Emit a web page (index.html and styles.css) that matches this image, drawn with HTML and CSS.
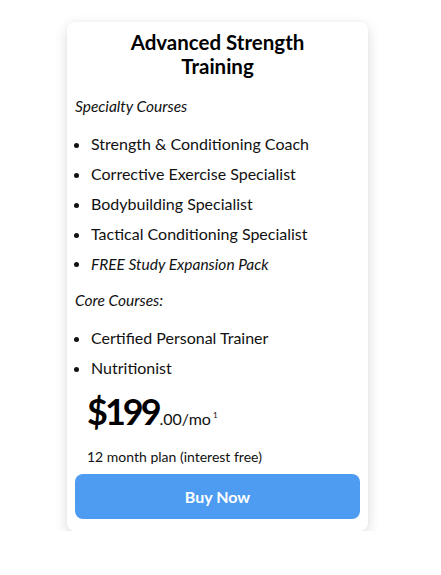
FILE: index.html
```html
<!DOCTYPE html>
<html>
<head>
<meta charset="utf-8">
<link rel="stylesheet" href="styles.css">
</head>
<body>
<div class="card">
  <h2 class="title">Advanced Strength<br>Training</h2>
  <p class="group-label group-first">Specialty Courses</p>
  <ul class="courses">
    <li>Strength &amp; Conditioning Coach</li>
    <li>Corrective Exercise Specialist</li>
    <li>Bodybuilding Specialist</li>
    <li>Tactical Conditioning Specialist</li>
    <li class="bonus">FREE Study Expansion Pack</li>
  </ul>
  <p class="group-label">Core Courses:</p>
  <ul class="courses">
    <li>Certified Personal Trainer</li>
    <li>Nutritionist</li>
  </ul>
  <div class="pricing">
    <div class="price"><span class="amount">$199</span><span class="cents">.00/mo</span><sup class="note">1</sup></div>
    <div class="plan">12 month plan (interest free)</div>
  </div>
  <button class="buy">Buy Now</button>
</div>
</body>
</html>
```
FILE: styles.css
```css
* { box-sizing: border-box; }
html, body { margin: 0; padding: 0; background: #fff; }
body {
  font-family: Lato, "Open Sans", sans-serif;
  color: #111;
  padding: 22px 0 0 67px;
}
.card {
  width: 301px;
  background: #fff;
  border-radius: 8px;
  box-shadow: 0 4px 14px rgba(0, 0, 0, 0.14), 0 0 3px rgba(0,0,0,0.04);
  padding: 8px 8px 12px 8px;
  display: flex;
  flex-direction: column;
}
.title {
  margin: 0;
  font-size: 20.5px;
  line-height: 24px;
  font-weight: 700;
  text-align: center;
  color: #000;
}
.group-label {
  margin: 11px 0 0 0;
  font-size: 15.5px;
  line-height: 20px;
  font-style: italic;
}
.group-first { margin-top: 18px; }
.courses {
  margin: 13px 0 0 0;
  padding: 0 0 0 16px;
  list-style: disc;
}
.courses li {
  font-size: 16px;
  line-height: 30px;
}
.courses .bonus { font-style: italic; font-size: 15.5px; }
.pricing {
  padding-left: 12px;
  margin-top: 8px;
}
.price {
  height: 40px;
  line-height: 40px;
  white-space: nowrap;
}
.amount {
  font-size: 36px;
  font-weight: 700;
  letter-spacing: -3px;
  color: #000;
}
.cents {
  font-size: 16px;
  margin-left: 1px;
}
.note {
  font-size: 8px;
  line-height: 0;
  vertical-align: 7px;
  margin-left: 2px;
}
.plan {
  margin-top: 16px;
  font-size: 14px;
  line-height: 20px;
}
.buy {
  margin-top: 7px;
  height: 45px;
  width: 100%;
  border: none;
  border-radius: 8px;
  background: #4d9cf2;
  color: #fff;
  font-family: Lato, sans-serif;
  font-size: 16px;
  font-weight: 700;
}
```
